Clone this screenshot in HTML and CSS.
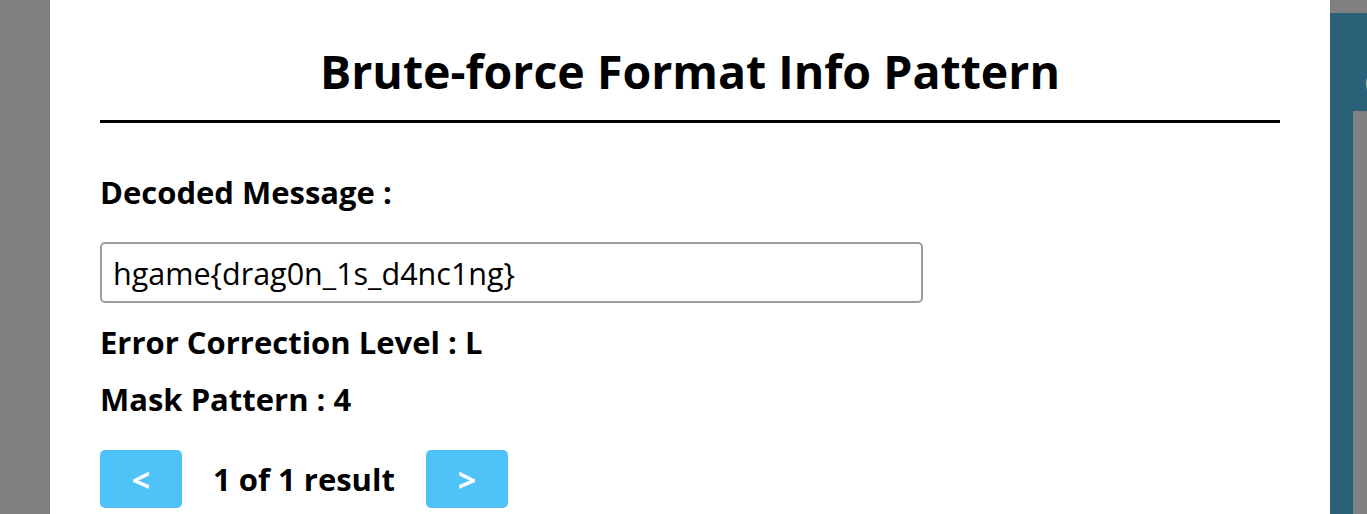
FILE: index.html
```html
<!DOCTYPE html>
<html>
<head>
<meta charset="utf-8">
<link rel="stylesheet" href="styles.css">
</head>
<body>
<div class="screen">
  <div class="side-left"></div>
  <div class="modal">
    <h1 class="title">Brute-force Format Info Pattern</h1>
    <div class="rule"></div>
    <div class="label label-decoded">Decoded Message :</div>
    <input class="message" type="text" value="hgame{drag0n_1s_d4nc1ng}">
    <div class="label label-ecl">Error Correction Level : L</div>
    <div class="label label-mask">Mask Pattern : 4</div>
    <div class="pager">
      <button class="btn">&lt;</button>
      <span class="count">1 of 1 result</span>
      <button class="btn">&gt;</button>
    </div>
  </div>
  <div class="side-right">
    <div class="side-top"></div>
    <div class="panel">
      <span class="panel-glyph">C</span>
      <div class="panel-box"></div>
    </div>
  </div>
</div>
</body>
</html>
```
FILE: styles.css
```css
html, body {
  margin: 0;
  padding: 0;
  height: 100%;
  overflow: hidden;
  background: #808080;
  font-family: "Open Sans", "DejaVu Sans", sans-serif;
}
.screen {
  display: flex;
  height: 514px;
  width: 1367px;
}
.side-left {
  width: 50px;
  flex: none;
}
.modal {
  width: 1280px;
  flex: none;
  background: #ffffff;
  padding: 43px 50px 0 50px;
  box-sizing: border-box;
  display: flex;
  flex-direction: column;
  color: #000;
}
.title {
  margin: 0;
  font-size: 46.5px;
  line-height: 56px;
  font-weight: 700;
  text-align: center;
}
.rule {
  margin-top: 21px;
  height: 3px;
  background: #000;
}
.label {
  font-size: 31px;
  line-height: 40px;
  font-weight: 700;
}
.label-decoded {
  margin-top: 49px;
}
.message {
  margin-top: 30px;
  width: 823px;
  height: 61px;
  box-sizing: border-box;
  border: 2px solid #9e9e9e;
  border-radius: 5px;
  padding: 0 11px;
  font-family: "Open Sans", "DejaVu Sans", sans-serif;
  font-size: 30.5px;
  color: #000;
  outline: none;
}
.label-ecl {
  margin-top: 19px;
}
.label-mask {
  margin-top: 17px;
}
.pager {
  margin-top: 31px;
  display: flex;
  align-items: center;
  gap: 31px;
}
.btn {
  width: 82px;
  height: 58px;
  border: none;
  border-radius: 5px;
  background: #4fc3f7;
  color: #fff;
  font-family: "Open Sans", "DejaVu Sans", sans-serif;
  font-size: 32px;
  font-weight: 700;
  padding: 0;
}
.count {
  font-size: 31px;
  font-weight: 700;
}
.side-right {
  flex: 1;
  display: flex;
  flex-direction: column;
}
.side-top {
  height: 13px;
  flex: none;
}
.panel {
  flex: 1;
  background: #2a6078;
  position: relative;
  display: flex;
  flex-direction: column;
  overflow: hidden;
}
.panel-glyph {
  position: absolute;
  left: 34px;
  top: 50px;
  font-size: 30px;
  color: #a9a9a9;
  line-height: 40px;
}
.panel-box {
  margin-top: 98px;
  margin-left: 23px;
  flex: 1;
  background: #808080;
}
```
